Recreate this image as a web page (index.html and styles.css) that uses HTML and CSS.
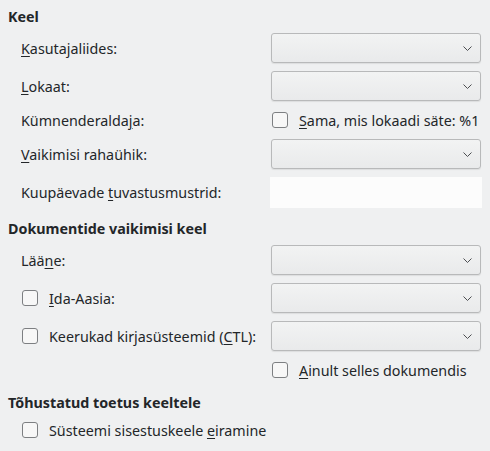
FILE: index.html
```html
<!DOCTYPE html>
<html>
<head>
<meta charset="utf-8">
<link rel="stylesheet" href="styles.css">
</head>
<body>
<div class="page">
  <section class="section">
    <div class="heading">Keel</div>
    <div class="rows">
      <div class="row">
        <span class="label"><u>K</u>asutajaliides:</span>
        <div class="combo"><svg class="chev" width="9" height="5" viewBox="0 0 9 5"><path d="M0.5 0.5 L4.5 4.5 L8.5 0.5" fill="none" stroke="#4d4f52" stroke-width="1"/></svg></div>
      </div>
      <div class="row">
        <span class="label"><u>L</u>okaat:</span>
        <div class="combo"><svg class="chev" width="9" height="5" viewBox="0 0 9 5"><path d="M0.5 0.5 L4.5 4.5 L8.5 0.5" fill="none" stroke="#4d4f52" stroke-width="1"/></svg></div>
      </div>
      <div class="row short">
        <span class="label">Kümnenderalda<u>j</u>a:</span>
        <label class="check"><span class="box"></span><span><u>S</u>ama, mis lokaadi säte: %1</span></label>
      </div>
      <div class="row">
        <span class="label"><u>V</u>aikimisi rahaühik:</span>
        <div class="combo"><svg class="chev" width="9" height="5" viewBox="0 0 9 5"><path d="M0.5 0.5 L4.5 4.5 L8.5 0.5" fill="none" stroke="#4d4f52" stroke-width="1"/></svg></div>
      </div>
      <div class="row">
        <span class="label">Kuupäevade <u>t</u>uvastusmustrid:</span>
        <div class="field"></div>
      </div>
    </div>
  </section>

  <section class="section">
    <div class="heading">Dokumentide vaikimisi keel</div>
    <div class="rows">
      <div class="row">
        <span class="label">Lää<u>n</u>e:</span>
        <div class="combo"><svg class="chev" width="9" height="5" viewBox="0 0 9 5"><path d="M0.5 0.5 L4.5 4.5 L8.5 0.5" fill="none" stroke="#4d4f52" stroke-width="1"/></svg></div>
      </div>
      <div class="row">
        <label class="check"><span class="box"></span><span><u>I</u>da-Aasia:</span></label>
        <div class="combo"><svg class="chev" width="9" height="5" viewBox="0 0 9 5"><path d="M0.5 0.5 L4.5 4.5 L8.5 0.5" fill="none" stroke="#4d4f52" stroke-width="1"/></svg></div>
      </div>
      <div class="row">
        <label class="check"><span class="box"></span><span>Keerukad kirjasüsteemid (<u>C</u>TL):</span></label>
        <div class="combo"><svg class="chev" width="9" height="5" viewBox="0 0 9 5"><path d="M0.5 0.5 L4.5 4.5 L8.5 0.5" fill="none" stroke="#4d4f52" stroke-width="1"/></svg></div>
      </div>
      <div class="row short">
        <span class="label"></span>
        <label class="check"><span class="box"></span><span><u>A</u>inult selles dokumendis</span></label>
      </div>
    </div>
  </section>

  <section class="section">
    <div class="heading">Tõhustatud toetus keeltele</div>
    <div class="rows">
      <div class="row short single">
        <label class="check"><span class="box"></span><span>Süsteemi sisestuskeele <u>e</u>iramine</span></label>
      </div>
    </div>
  </section>
</div>
</body>
</html>
```

FILE: styles.css
```css
html, body {
  margin: 0;
  padding: 0;
  background: #eff0f1;
}
body {
  font-family: "Noto Sans", "Open Sans", sans-serif;
  font-size: 14.3px;
  color: #232629;
  width: 490px;
  height: 451px;
  overflow: hidden;
}
.page {
  display: flex;
  flex-direction: column;
  gap: 12px;
  padding: 7px 0 0 8px;
}
.section {
  display: flex;
  flex-direction: column;
  gap: 6px;
}
.heading {
  font-weight: bold;
  line-height: 20px;
  height: 20px;
}
.rows {
  display: flex;
  flex-direction: column;
  gap: 8px;
  padding-left: 13px;
}
.row {
  display: grid;
  grid-template-columns: 250px 210px;
  align-items: center;
  height: 30px;
}
.row.short {
  height: 22px;
}
.row.single {
  grid-template-columns: 1fr;
}
.label {
  white-space: nowrap;
}
u {
  text-decoration-thickness: 1px;
  text-underline-offset: 2px;
}
.combo {
  height: 28px;
  border: 1px solid #b8b9ba;
  border-radius: 3px;
  background: linear-gradient(#f2f3f3, #e9eaeb);
  box-shadow: 0 1px 1px rgba(0, 0, 0, 0.08);
  display: flex;
  align-items: center;
  justify-content: flex-end;
  padding-right: 8px;
}
.chev {
  display: block;
}
.field {
  height: 31px;
  background: #fcfcfc;
  margin-left: -1px;
  margin-right: -1px;
}
.check {
  display: flex;
  align-items: center;
  gap: 11px;
  white-space: nowrap;
}
.box {
  width: 14px;
  height: 14px;
  border: 1px solid #7d7f82;
  border-radius: 3px;
  background: #f7f7f7;
  flex: none;
  margin-left: 1px;
}
```
